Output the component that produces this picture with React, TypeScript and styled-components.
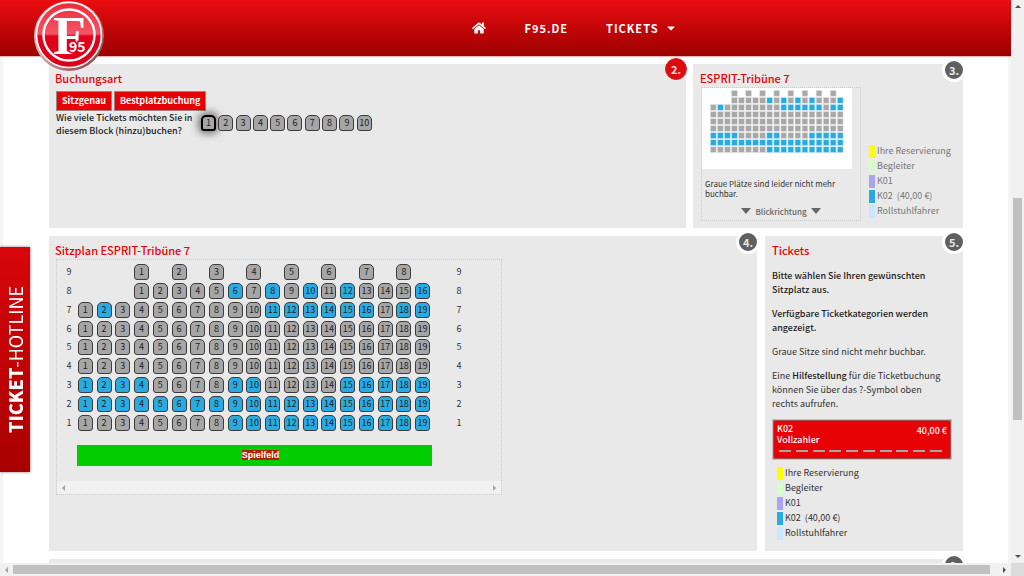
import React from 'react';
import styled, { createGlobalStyle, css } from 'styled-components';
import { FaHome, FaCaretDown } from 'react-icons/fa';

const GlobalStyle = createGlobalStyle`
  * { box-sizing: border-box; }
  body {
    margin: 0;
    overflow: hidden;
    background: #fff;
    color: #333;
    font-family: "Noto Sans CJK SC", "Noto Sans", sans-serif;
    font-size: 9px;
    line-height: 14px;
  }
  button { font-family: inherit; padding: 0; cursor: pointer; }
  p, h2 { margin: 0; }
`;

const RED = '#e60205';
const BLUE = '#29abe2';
const GREY = '#a6a6a6';
const PANEL = '#e9e9e9';

/* ---------- Page frame ---------- */

const Window = styled.div`
  display: grid;
  grid-template: minmax(0, 1fr) 13px / minmax(0, 1fr) 13px;
  height: 100vh;
`;

const Viewport = styled.div`
  position: relative;
  overflow: hidden;
`;

const ScrollTrack = styled.div<{ $vertical?: boolean }>`
  display: flex;
  flex-direction: ${p => (p.$vertical ? 'column' : 'row')};
  align-items: center;
  background: #f1f1f1;
`;

const ScrollArrow = styled.span<{ $dir: 'up' | 'down' | 'left' | 'right'; $muted?: boolean }>`
  display: grid;
  place-items: center;
  flex: none;
  width: 13px;
  height: 13px;
  &::before {
    content: '';
    border: 3px solid transparent;
    ${p => {
      const c = p.$muted ? '#a3a3a3' : '#505050';
      if (p.$dir === 'up') return css`border-top: 0; border-bottom-color: ${c};`;
      if (p.$dir === 'down') return css`border-bottom: 0; border-top-color: ${c};`;
      if (p.$dir === 'left') return css`border-left: 0; border-right-color: ${c};`;
      return css`border-right: 0; border-left-color: ${c};`;
    }}
  }
`;

const ScrollSpace = styled.span<{ $grow: number }>`
  flex: ${p => p.$grow} 0 0;
`;

const ScrollThumb = styled.span<{ $grow: number; $vertical?: boolean }>`
  flex: ${p => p.$grow} 0 0;
  align-self: stretch;
  margin: ${p => (p.$vertical ? '0 2px' : '2px 0')};
  background: #c1c1c1;
`;

const ScrollCorner = styled.div`
  background: #dcdcdc;
`;

/* ---------- Header ---------- */

const Header = styled.header`
  position: relative;
  z-index: 2;
  display: flex;
  align-items: flex-start;
  height: 57px;
  padding-left: 33px;
  border-bottom: 1px solid #eeb4b4;
  background: linear-gradient(#ea0c10, #9c0000) padding-box;
`;

const LogoLink = styled.a`
  flex: none;
  width: 72px;
  height: 72px;
`;

const Nav = styled.nav`
  flex: 1;
  display: flex;
  justify-content: center;
  align-items: center;
  gap: 38px;
  height: 56px;
  padding-left: 33px;
`;

const NavLink = styled.a`
  display: flex;
  align-items: center;
  gap: 6px;
  color: #fff;
  font-size: 11px;
  font-weight: 700;
  letter-spacing: 1px;
  text-decoration: none;
`;

/* ---------- Panels ---------- */

const Main = styled.main`
  display: flex;
  flex-direction: column;
  gap: 8px;
  padding: 7px 45px 0 46px;
  border: solid #f5f5f5;
  border-width: 0 3px;
`;

const Row = styled.div<{ $gap: number }>`
  display: flex;
  gap: ${p => p.$gap}px;
`;

const Panel = styled.section<{ $width?: number; $minHeight?: number }>`
  position: relative;
  flex: ${p => (p.$width ? `0 0 ${p.$width}px` : '1 1 0')};
  min-width: 0;
  min-height: ${p => p.$minHeight ?? 0}px;
  padding: 7px 6px 7px ${p => (p.$width ? 7 : 6)}px;
  background: ${PANEL};
`;

const Badge = styled.span<{ $active?: boolean }>`
  position: absolute;
  top: -6px;
  right: ${p => (p.$active ? -1 : -3)}px;
  display: grid;
  place-items: center;
  width: ${p => (p.$active ? 22 : 24)}px;
  height: ${p => (p.$active ? 22 : 24)}px;
  border: ${p => (p.$active ? '1px solid #c8282a' : '3px solid #fff')};
  border-radius: 50%;
  background: ${p => (p.$active ? '#e00a0d' : '#5f5f5f')};
  color: #e6e6e6;
  font-size: 11px;
  font-weight: 700;
`;

const Title = styled.h2`
  padding-bottom: 2px;
  color: ${RED};
  font-size: 11px;
  font-weight: 500;
  line-height: 14px;
`;

/* ---------- Booking mode ---------- */

const Modes = styled.div`
  display: flex;
  gap: 2px;
  padding: 4px 0 0 1px;
`;

const ModeButton = styled.button`
  height: 20px;
  padding: 0 5px;
  border: 1px solid #a08080;
  background: ${RED};
  color: #fff;
  font-size: 9px;
  font-weight: 700;
  line-height: 18px;
`;

const Question = styled.div`
  display: flex;
  color: #222;
`;

const QuestionText = styled.p`
  width: 146px;
  padding-left: 1px;
  font-weight: 500;
  line-height: 13px;
  white-space: nowrap;
`;

const Amounts = styled.div`
  display: grid;
  grid-template-columns: repeat(10, 1fr);
  width: 173px;
  padding-top: 4px;
`;

const Seat = styled.button<{ $free?: boolean; $picked?: boolean }>`
  width: 15px;
  height: 16px;
  border: 1px solid #3c3c3c;
  border-radius: 5px 5px 3px 3px;
  background: ${p => (p.$free ? BLUE : GREY)};
  color: #222;
  font-size: 9px;
  line-height: 14px;
  text-align: center;
  ${p => p.$picked && css`
    border: 2px solid #000;
    line-height: 12px;
    box-shadow: 0 0 8px 2px rgba(0, 0, 0, 0.6);
  `}
`;

/* ---------- Block overview ---------- */

const Overview = styled.div`
  display: flex;
  align-items: flex-end;
  gap: 8px;
`;

const OverviewFrame = styled.div`
  flex: none;
  width: 160px;
  margin-left: 1px;
  border: 1px dotted #ccc;
  color: #333;
`;

const MiniPlan = styled.svg`
  display: block;
  width: 150px;
  height: 81px;
  background: #fff;
`;

const MiniNote = styled.p`
  padding: 10px 20px 0 3px;
  font-size: 8px;
  line-height: 10px;
`;

const Direction = styled.p`
  display: flex;
  justify-content: center;
  align-items: center;
  gap: 4px;
  padding: 6px 0 1px;
  color: #666;
  font-size: 8px;
  font-weight: 500;
`;

const DownMark = styled.span`
  margin-bottom: 3px;
  border: solid transparent;
  border-width: 6px 5px 0;
  border-top-color: #666;
`;

/* ---------- Legend ---------- */

const LegendList = styled.ul<{ $soft?: boolean }>`
  display: flex;
  flex-direction: column;
  gap: 1px;
  margin: 0;
  padding: 0 0 ${p => (p.$soft ? 3 : 0)}px;
  list-style: none;
  color: ${p => (p.$soft ? '#777' : '#333')};
  white-space: pre;
`;

const LegendItem = styled.li<{ $color: string }>`
  display: flex;
  align-items: center;
  gap: 2px;
  &::before {
    content: '';
    width: 6px;
    height: 13px;
    background: ${p => p.$color};
  }
`;

/* ---------- Seating plan ---------- */

const PlanFrame = styled.div`
  width: 446px;
  margin-left: 1px;
  border: 1px dotted #ccc;
`;

const PlanGrid = styled.div`
  display: grid;
  grid-template-columns: 14px repeat(19, 1fr) 54px;
  grid-template-rows: repeat(9, 1fr);
  place-items: center;
  width: 424px;
  height: 169px;
  margin: 3px 0 0 5px;
`;

const PlanCell = styled.span<{ $col: number; $row: number }>`
  display: grid;
  grid-column: ${p => p.$col};
  grid-row: ${p => p.$row};
`;

const Pitch = styled.div`
  width: 355px;
  margin: 13px 0 15px 20px;
  padding-left: 12px;
  background: #00cc00;
  color: #fff;
  font-family: "Liberation Sans", Arial, sans-serif;
  font-size: 9px;
  font-weight: 700;
  line-height: 21px;
  text-align: center;
`;

const PitchLabel = styled.span`
  background: #b02008;
`;

/* ---------- Tickets ---------- */

const Copy = styled.div`
  display: flex;
  flex-direction: column;
  gap: 10px;
  padding: 10px 0 8px;
  white-space: nowrap;
`;

const Strong = styled.strong`
  color: #222;
  font-weight: 500;
`;

const TicketButton = styled.button`
  display: grid;
  grid-template-columns: 1fr auto;
  width: 180px;
  padding: 2px 3px 6px;
  border: 2px solid #a05050;
  border-radius: 3px;
  outline: 1px solid #c4c4c4;
  outline-offset: -1px;
  background: ${RED};
  color: #fff;
  font-size: 9px;
  font-weight: 500;
  line-height: 11px;
  text-align: left;
`;

const Price = styled.span`
  padding-top: 2px;
`;

const Dashes = styled.span`
  grid-column: 1 / -1;
  display: flex;
  justify-content: space-between;
  padding: 5px 5px 0 2px;
`;

const Dash = styled.span`
  width: 12px;
  height: 2px;
  background: #a6a6a6;
`;

const TicketLegend = styled.div`
  padding: 6px 0 4px 5px;
`;

/* ---------- Hotline tab ---------- */

const Hotline = styled.a`
  position: fixed;
  top: 247px;
  left: 0;
  z-index: 3;
  display: flex;
  align-items: center;
  justify-content: center;
  width: 30px;
  height: 225px;
  background: linear-gradient(#a80000, #d8060b);
  box-shadow: 0 0 3px rgba(0, 0, 0, 0.5);
  color: #fff;
  font-size: 18px;
  font-weight: 400;
  line-height: 30px;
  text-decoration: none;
  writing-mode: vertical-rl;
  transform: rotate(180deg);
`;

const Heavy = styled.b`
  font-weight: 900;
`;

/* ---------- Data ---------- */

type PlanRow = { name: number; cols: number[]; free: number[] };

const span = (a: number, b: number) => Array.from({ length: b - a + 1 }, (_, i) => a + i);
const full = span(1, 19);

// "cols" are grid columns; "free" holds the seat numbers that can be booked.
const rows: PlanRow[] = [
  { name: 9, cols: [4, 6, 8, 10, 12, 14, 16, 18], free: [] },
  { name: 8, cols: span(4, 19), free: [6, 8, 10, 12, 16] },
  { name: 7, cols: full, free: [2, ...span(11, 16), 18, 19] },
  { name: 6, cols: full, free: [] },
  { name: 5, cols: full, free: [] },
  { name: 4, cols: full, free: [] },
  { name: 3, cols: full, free: [1, 2, 3, 4, 9, 10, ...span(15, 19)] },
  { name: 2, cols: full, free: full },
  { name: 1, cols: full, free: span(9, 19) },
];

const categories = [
  ['Ihre Reservierung', '#ffff00'],
  ['Begleiter', '#d8fcc8'],
  ['K01', '#a9a5f3'],
  ['K02  (40,00 €)', BLUE],
  ['Rollstuhlfahrer', '#cce6ff'],
];

const Legend = ({ soft }: { soft?: boolean }) => (
  <LegendList $soft={soft}>
    {categories.map(([label, color]) => (
      <LegendItem key={label} $color={color}>{label}</LegendItem>
    ))}
  </LegendList>
);

const Logo = () => (
  <svg width="72" height="72" viewBox="0 0 72 72" role="img" aria-label="F95">
    <defs>
      <linearGradient id="rim" x1="0" y1="0" x2="1" y2="1">
        <stop offset="0" stopColor="#f6c9cc" />
        <stop offset="0.5" stopColor="#c9a0a2" />
        <stop offset="1" stopColor="#7d2a2c" />
      </linearGradient>
      <linearGradient id="disc" x1="0" y1="0" x2="0" y2="1">
        <stop offset="0" stopColor="#ee2a38" />
        <stop offset="0.48" stopColor="#f45565" />
        <stop offset="0.52" stopColor="#e2001a" />
        <stop offset="1" stopColor="#dc0018" />
      </linearGradient>
    </defs>
    <circle cx="36" cy="36" r="35" fill="url(#rim)" />
    <circle cx="36" cy="35" r="32.5" fill="url(#disc)" stroke="#fff" strokeWidth="1.6" />
    <circle cx="36" cy="35" r="25.5" fill="none" stroke="#fff" strokeWidth="2.4" />
    <text x="20" y="54" fill="#fff" fontFamily="Liberation Serif, serif" fontWeight="700" fontSize="54">F</text>
    <text x="36" y="52" fill="#fff" stroke="#e2001a" strokeWidth="3" paintOrder="stroke" fontFamily="Noto Sans CJK SC, sans-serif" fontWeight="700" fontSize="14">95</text>
  </svg>
);

export default function App() {
  return (
    <Window>
      <GlobalStyle />
      <Viewport>
        <Header>
          <LogoLink href="#"><Logo /></LogoLink>
          <Nav>
            <NavLink href="#" aria-label="Start"><FaHome size={14} /></NavLink>
            <NavLink href="#">F95.DE</NavLink>
            <NavLink href="#">TICKETS <FaCaretDown size={12} /></NavLink>
          </Nav>
        </Header>

        <Main>
          <Row $gap={7}>
            <Panel $minHeight={164}>
              <Badge $active>2.</Badge>
              <Title>Buchungsart</Title>
              <Modes>
                <ModeButton>Sitzgenau</ModeButton>
                <ModeButton>Bestplatzbuchung</ModeButton>
              </Modes>
              <Question>
                <QuestionText>Wie viele Tickets möchten Sie in<br />diesem Block (hinzu)buchen?</QuestionText>
                <Amounts>
                  {span(1, 10).map(n => <Seat key={n} $picked={n === 1}>{n}</Seat>)}
                </Amounts>
              </Question>
            </Panel>

            <Panel $width={270}>
              <Badge>3.</Badge>
              <Title>ESPRIT-Tribüne 7</Title>
              <Overview>
                <OverviewFrame>
                  <MiniPlan viewBox="0 0 150 81" role="img" aria-label="Blockübersicht">
                    {rows.map((row, r) => row.cols.map((col, i) => {
                      const free = row.free.includes(i + 1);
                      return (
                        <rect
                          key={`${r}-${col}`}
                          x={8.4 + (col - 1) * 7.05}
                          y={2.4 + r * 7.05}
                          width="5.8"
                          height="5.8"
                          fill={free ? BLUE : '#a8a8a8'}
                          stroke={free ? '#c4e6f6' : '#e4e4e4'}
                          strokeWidth="0.6"
                        />
                      );
                    }))}
                  </MiniPlan>
                  <MiniNote>Graue Plätze sind leider nicht mehr buchbar.</MiniNote>
                  <Direction><DownMark />Blickrichtung<DownMark /></Direction>
                </OverviewFrame>
                <Legend soft />
              </Overview>
            </Panel>
          </Row>

          <Row $gap={8}>
            <Panel $minHeight={315}>
              <Badge>4.</Badge>
              <Title>Sitzplan ESPRIT-Tribüne 7</Title>
              <PlanFrame>
                <PlanGrid>
                  {rows.map((row, r) => (
                    <React.Fragment key={row.name}>
                      <PlanCell $col={1} $row={r + 1}>{row.name}</PlanCell>
                      {row.cols.map((col, i) => (
                        <PlanCell key={col} $col={col + 1} $row={r + 1}>
                          <Seat $free={row.free.includes(i + 1)}>{i + 1}</Seat>
                        </PlanCell>
                      ))}
                      <PlanCell $col={21} $row={r + 1}>{row.name}</PlanCell>
                    </React.Fragment>
                  ))}
                </PlanGrid>
                <Pitch><PitchLabel>Spielfeld</PitchLabel></Pitch>
                <ScrollTrack>
                  <ScrollArrow $dir="left" $muted />
                  <ScrollSpace $grow={1} />
                  <ScrollArrow $dir="right" $muted />
                </ScrollTrack>
              </PlanFrame>
            </Panel>

            <Panel $width={198}>
              <Badge>5.</Badge>
              <Title>Tickets</Title>
              <Copy>
                <p><Strong>Bitte wählen Sie Ihren gewünschten<br />Sitzplatz aus.</Strong></p>
                <p><Strong>Verfügbare Ticketkategorien werden<br />angezeigt.</Strong></p>
                <p>Graue Sitze sind nicht mehr buchbar.</p>
                <p>Eine <Strong>Hilfestellung</Strong> für die Ticketbuchung<br />können Sie über das ?-Symbol oben<br />rechts aufrufen.</p>
              </Copy>
              <TicketButton>
                <span>K02<br />Vollzahler</span>
                <Price>40,00 €</Price>
                <Dashes>{span(1, 10).map(n => <Dash key={n} />)}</Dashes>
              </TicketButton>
              <TicketLegend><Legend /></TicketLegend>
            </Panel>
          </Row>

          <Row $gap={8}>
            <Panel $minHeight={60}><Badge>6.</Badge></Panel>
          </Row>
        </Main>

        <Hotline href="#"><span><Heavy>TICKET</Heavy>-HOTLINE</span></Hotline>
      </Viewport>

      <ScrollTrack $vertical aria-hidden="true">
        <ScrollArrow $dir="up" />
        <ScrollSpace $grow={185} />
        <ScrollThumb $grow={222} $vertical />
        <ScrollSpace $grow={130} />
        <ScrollArrow $dir="down" />
      </ScrollTrack>
      <ScrollTrack aria-hidden="true">
        <ScrollArrow $dir="left" $muted />
        <ScrollThumb $grow={977} />
        <ScrollSpace $grow={8} />
        <ScrollArrow $dir="right" />
      </ScrollTrack>
      <ScrollCorner />
    </Window>
  );
}
